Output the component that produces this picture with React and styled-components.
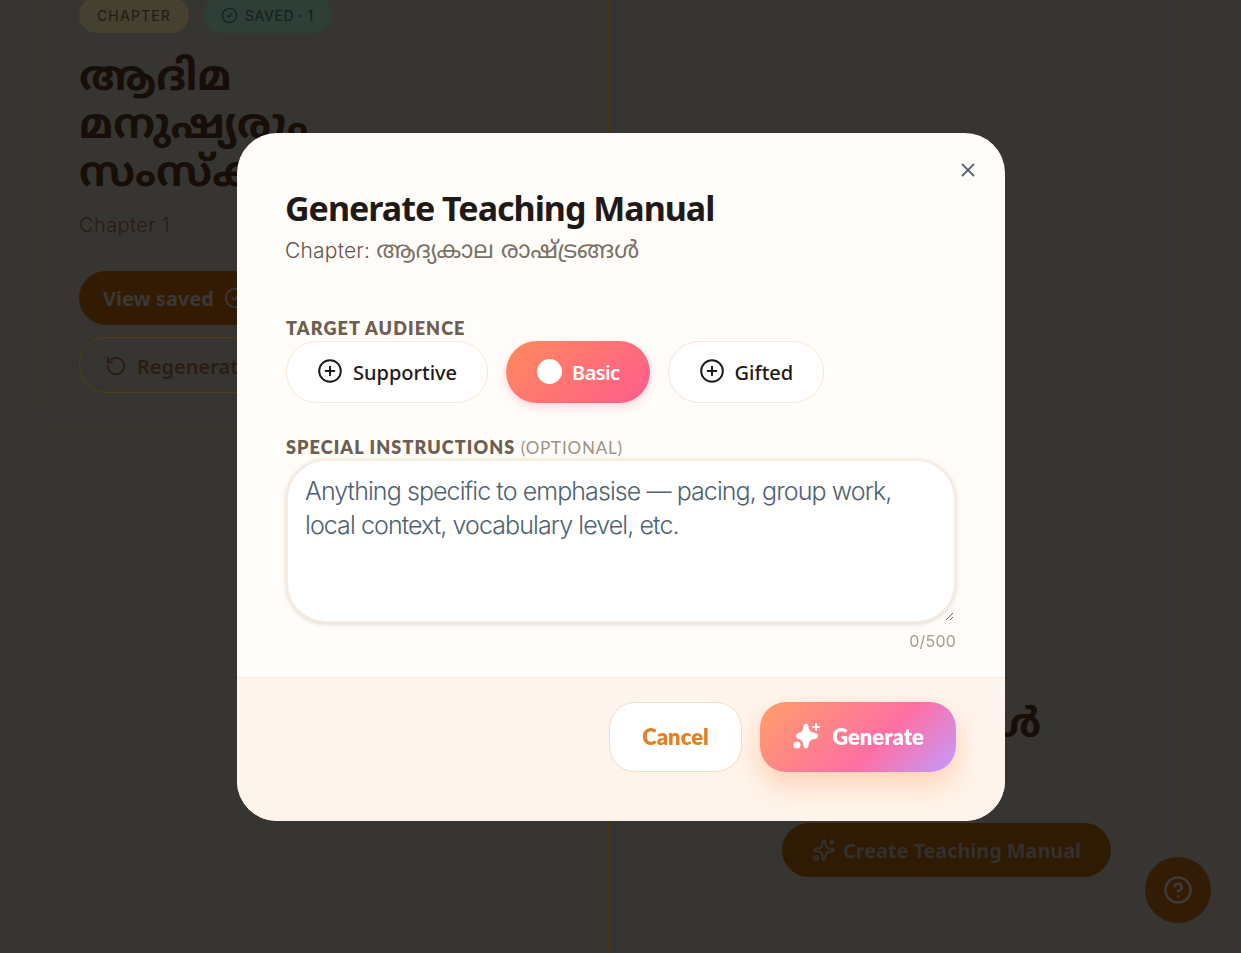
import React from 'react';
import styled, { createGlobalStyle } from 'styled-components';
import { CircleCheck, CircleHelp, RotateCcw, X, CirclePlus, Sparkles } from 'lucide-react';

const GlobalStyle = createGlobalStyle`
    html, body {
        margin: 0;
        height: 100%;
        overflow: hidden;
        background: #363532;
    }
    * {
        box-sizing: border-box;
    }
`;

const MALAYALAM = '"Noto Sans Malayalam", "Noto Sans", sans-serif';

const Page = styled.div`
    height: 953px;
    overflow: hidden;
    display: grid;
    grid-template-columns: 610px 1fr;
    font-family: "Inter", sans-serif;
    background: #363532;
`;

const LeftPane = styled.section`
    border-right: 3px solid #47370f;
    padding-left: 36px;
`;

const LeftCard = styled.div`
    height: 430px;
    overflow: hidden;
    padding-left: 42px;
    border-left: 1px solid #3c3621;
    border-bottom: 1px solid #3c3621;
    border-bottom-left-radius: 24px;
`;

const BadgeRow = styled.div`
    display: flex;
    gap: 14px;
    margin-top: -3px;
`;

const Badge = styled.div`
    height: 36px;
    padding: 0 18px;
    border-radius: 18px;
    display: flex;
    align-items: center;
    gap: 7px;
    font: 500 14px "Inter", sans-serif;
    letter-spacing: ${p => p.$tone === 'green' ? '0.55px' : '1.1px'};
    background: ${p => p.$tone === 'green' ? '#2f3f38' : '#454030'};
    color: ${p => p.$tone === 'green' ? '#14231c' : '#261d10'};
`;

const ChapterTitle = styled.h1`
    margin: 23px 0 0;
    width: 300px;
    font: 700 42px/48px ${MALAYALAM};
    color: #170e08;
`;

const ChapterSub = styled.p`
    margin: 11px 0 0;
    font: 300 20px/28px "Inter", sans-serif;
    letter-spacing: 0.4px;
    color: #2a1a11;
`;

const SavedButton = styled.div`
    margin-top: 32px;
    width: 300px;
    height: 54px;
    padding: 0 24px;
    border-radius: 27px;
    background: #331b03;
    display: flex;
    align-items: center;
    gap: 10px;
    font: 700 20px "Noto Sans", sans-serif;
    color: #3a3836;
`;

const RegenButton = styled.div`
    margin-top: 12px;
    width: 300px;
    height: 56px;
    padding: 2px 26px 0 25px;
    border: 1px solid #4f3f14;
    border-radius: 28px;
    display: flex;
    align-items: center;
    gap: 10px;
    font: 600 20px "Noto Sans", sans-serif;
    color: #2b1c12;
`;

const RightPane = styled.section`
    padding-left: 100px;
`;

const RightCard = styled.div`
    width: 473px;
    height: 918px;
    padding: 701px 0 0 72px;
    border-right: 1px solid #3a3626;
    border-bottom: 1px solid #3a3626;
    border-radius: 0 0 40px 100px / 0 0 40px 40px;
`;

const RightHeading = styled.div`
    width: 258px;
    text-align: right;
    font: 700 40px/52px ${MALAYALAM};
    color: #170e08;
`;

const CreateButton = styled.div`
    margin-top: 70px;
    width: 329px;
    height: 54px;
    border-radius: 27px;
    background: #2f1a04;
    display: flex;
    align-items: center;
    justify-content: center;
    gap: 7px;
    font: 700 20px "Noto Sans", sans-serif;
    letter-spacing: -0.1px;
    color: #33302e;
`;

const HelpButton = styled.div`
    position: fixed;
    left: 1145px;
    top: 857px;
    width: 66px;
    height: 66px;
    border-radius: 50%;
    background: #331c06;
    display: flex;
    align-items: center;
    justify-content: center;
    color: #403b38;
`;

const Modal = styled.div`
    position: fixed;
    left: 237px;
    top: 133px;
    width: 768px;
    height: 688px;
    border-radius: 40px;
    overflow: hidden;
    background: #fffdf9;
    display: flex;
    flex-direction: column;
`;

const CloseButton = styled.button`
    position: absolute;
    right: 25px;
    top: 26px;
    width: 24px;
    height: 24px;
    padding: 0;
    border: none;
    background: none;
    color: #5b6670;
`;

const ModalBody = styled.div`
    padding: 48px 49px 0 49px;
    flex: 1;
`;

const ModalTitle = styled.h2`
    margin: 0 0 0 -1px;
    font: 700 34px/54px "Noto Sans", sans-serif;
    letter-spacing: -1px;
    color: #1f1a17;
`;

const ModalSub = styled.p`
    margin: 0 0 0 -1px;
    font: 300 21px/31px "Inter", ${MALAYALAM};
    letter-spacing: 0.2px;
    color: #5f564e;
`;

const SubMalayalam = styled.span`
    font: 400 23.8px/31px ${MALAYALAM};
    letter-spacing: 0;
    color: #7a7168;
`;

const SectionLabel = styled.div`
    font: 800 18px/24px "Lato", sans-serif;
    letter-spacing: 1.1px;
    color: #6e5f53;
    margin-top: ${p => p.$top}px;
`;

const LabelNote = styled.span`
    font-weight: 400;
    font-size: 17px;
    letter-spacing: 0.8px;
    color: #a09184;
`;

const ChipRow = styled.div`
    display: flex;
    gap: 18px;
    margin-top: 1px;
`;

const Chip = styled.div`
    height: 62px;
    padding: ${p => p.$active ? '0 30px 0 31px' : '0 30px 0 30px'};
    border-radius: 31px;
    display: flex;
    align-items: center;
    gap: 10px;
    font: ${p => p.$active ? 600 : 500} 20px "Noto Sans", sans-serif;
    letter-spacing: ${p => p.$active ? '-0.6px' : '0'};
    border: ${p => p.$active ? 'none' : '1px solid #fae6d5'};
    background: ${p => p.$active ? 'linear-gradient(135deg, #ff8a5c, #ff5c8d)' : '#fff'};
    color: ${p => p.$active ? '#fff' : '#1f1a17'};
    box-shadow: ${p => p.$active ? '0 4px 10px rgba(255, 92, 141, 0.25)' : 'none'};
    svg {
        margin-bottom: 2px;
    }
`;

const Dot = styled.span`
    width: 25px;
    height: 25px;
    margin-bottom: 2px;
    border-radius: 50%;
    background: #fff;
`;

const Instructions = styled.textarea`
    display: block;
    width: 670px;
    height: 164px;
    margin-top: -1px;
    padding: 13px 17px;
    border: 2px solid #f8ebe0;
    border-radius: 40px;
    outline: none;
    background: #fff;
    box-shadow: 0 1px 4px rgba(110, 90, 70, 0.25);
    font: 300 25px/34px "Inter", sans-serif;
    letter-spacing: -0.92px;
    color: #4f6272;
    &::placeholder {
        color: #4f6272;
        opacity: 1;
    }
`;

const Counter = styled.div`
    margin-top: 8px;
    text-align: right;
    font: 400 16px/20px "Inter", sans-serif;
    letter-spacing: 0.2px;
    color: #a79a8c;
`;

const ModalFooter = styled.div`
    height: 144px;
    padding: 24px 49px 0 0;
    display: flex;
    justify-content: flex-end;
    gap: 18px;
    border-top: 1px solid #f8e9dd;
    background: linear-gradient(180deg, #fff5ef, #fff4ea);
`;

const CancelButton = styled.div`
    width: 133px;
    height: 70px;
    padding-bottom: 2px;
    border: 1px solid #f6dcc3;
    border-radius: 26px;
    background: #fff;
    display: flex;
    align-items: center;
    justify-content: center;
    font: 800 22px "Lato", sans-serif;
    color: #e67e22;
`;

const GenerateButton = styled.div`
    width: 196px;
    height: 70px;
    padding-bottom: 2px;
    border-radius: 26px;
    background: linear-gradient(135deg, #ff9f68 0%, #ff6fa3 60%, #c29bff 100%);
    box-shadow: 0 12px 28px rgba(255, 150, 90, 0.4);
    display: flex;
    align-items: center;
    justify-content: center;
    gap: 11px;
    font: 800 22px "Lato", sans-serif;
    color: #fff;
    svg {
        margin-left: 1px;
    }
`;

const SparkIcon = () => (
    <svg width="28" height="28" viewBox="0 0 28 28" fill="currentColor">
        <path d="M13 1.500c1.500 0 2.200 1.200 2.500 3 .6 4 2 5.600 6 6.300 2.200.4 3.500 1.300 3.500 3.200 0 1.700-1.300 2.700-3.500 3.100-4 .7-5.400 2.300-6 6.100-.3 2-1 3.300-2.500 3.300s-2.200-1.300-2.500-3.300c-.5-3.800-1.800-5.400-4.500-6-1.800-.4-2.800-1.400-2.800-3.200s1-2.800 2.800-3.200c2.700-.6 4-2.300 4.500-6 .3-1.800 1-3 2.500-3z" />
        <path d="M23 2v6M20 5h6" stroke="currentColor" strokeWidth="2" strokeLinecap="round" />
        <circle cx="4" cy="23" r="3.500" />
    </svg>
);

const App = () => (
    <>
        <GlobalStyle />
        <Page>
            <LeftPane>
                <LeftCard>
                    <BadgeRow>
                        <Badge>CHAPTER</Badge>
                        <Badge $tone="green"><CircleCheck size={17} /> SAVED · 1</Badge>
                    </BadgeRow>
                    <ChapterTitle>ആദിമ മനുഷ്യരും സംസ്കാരവും</ChapterTitle>
                    <ChapterSub>Chapter 1</ChapterSub>
                    <SavedButton>View saved <CircleCheck size={22} /></SavedButton>
                    <RegenButton><RotateCcw size={22} /> Regenerate</RegenButton>
                </LeftCard>
            </LeftPane>
            <RightPane>
                <RightCard>
                    <RightHeading>രാഷ്ട്രങ്ങൾ</RightHeading>
                    <CreateButton><Sparkles size={24} /> Create Teaching Manual</CreateButton>
                </RightCard>
            </RightPane>
        </Page>
        <HelpButton><CircleHelp size={30} /></HelpButton>
        <Modal>
            <CloseButton><X size={22} /></CloseButton>
            <ModalBody>
                <ModalTitle>Generate Teaching Manual</ModalTitle>
                <ModalSub>Chapter: <SubMalayalam>ആദ്യകാല രാഷ്ട്രങ്ങൾ</SubMalayalam></ModalSub>
                <SectionLabel $top={48}>TARGET AUDIENCE</SectionLabel>
                <ChipRow>
                    <Chip><CirclePlus size={26} strokeWidth={1.8} /> Supportive</Chip>
                    <Chip $active><Dot /> Basic</Chip>
                    <Chip><CirclePlus size={26} strokeWidth={1.8} /> Gifted</Chip>
                </ChipRow>
                <SectionLabel $top={32}>SPECIAL INSTRUCTIONS <LabelNote>(OPTIONAL)</LabelNote></SectionLabel>
                <Instructions placeholder="Anything specific to emphasise — pacing, group work, local context, vocabulary level, etc." />
                <Counter>0/500</Counter>
            </ModalBody>
            <ModalFooter>
                <CancelButton>Cancel</CancelButton>
                <GenerateButton><SparkIcon /> Generate</GenerateButton>
            </ModalFooter>
        </Modal>
    </>
);

export default App;
